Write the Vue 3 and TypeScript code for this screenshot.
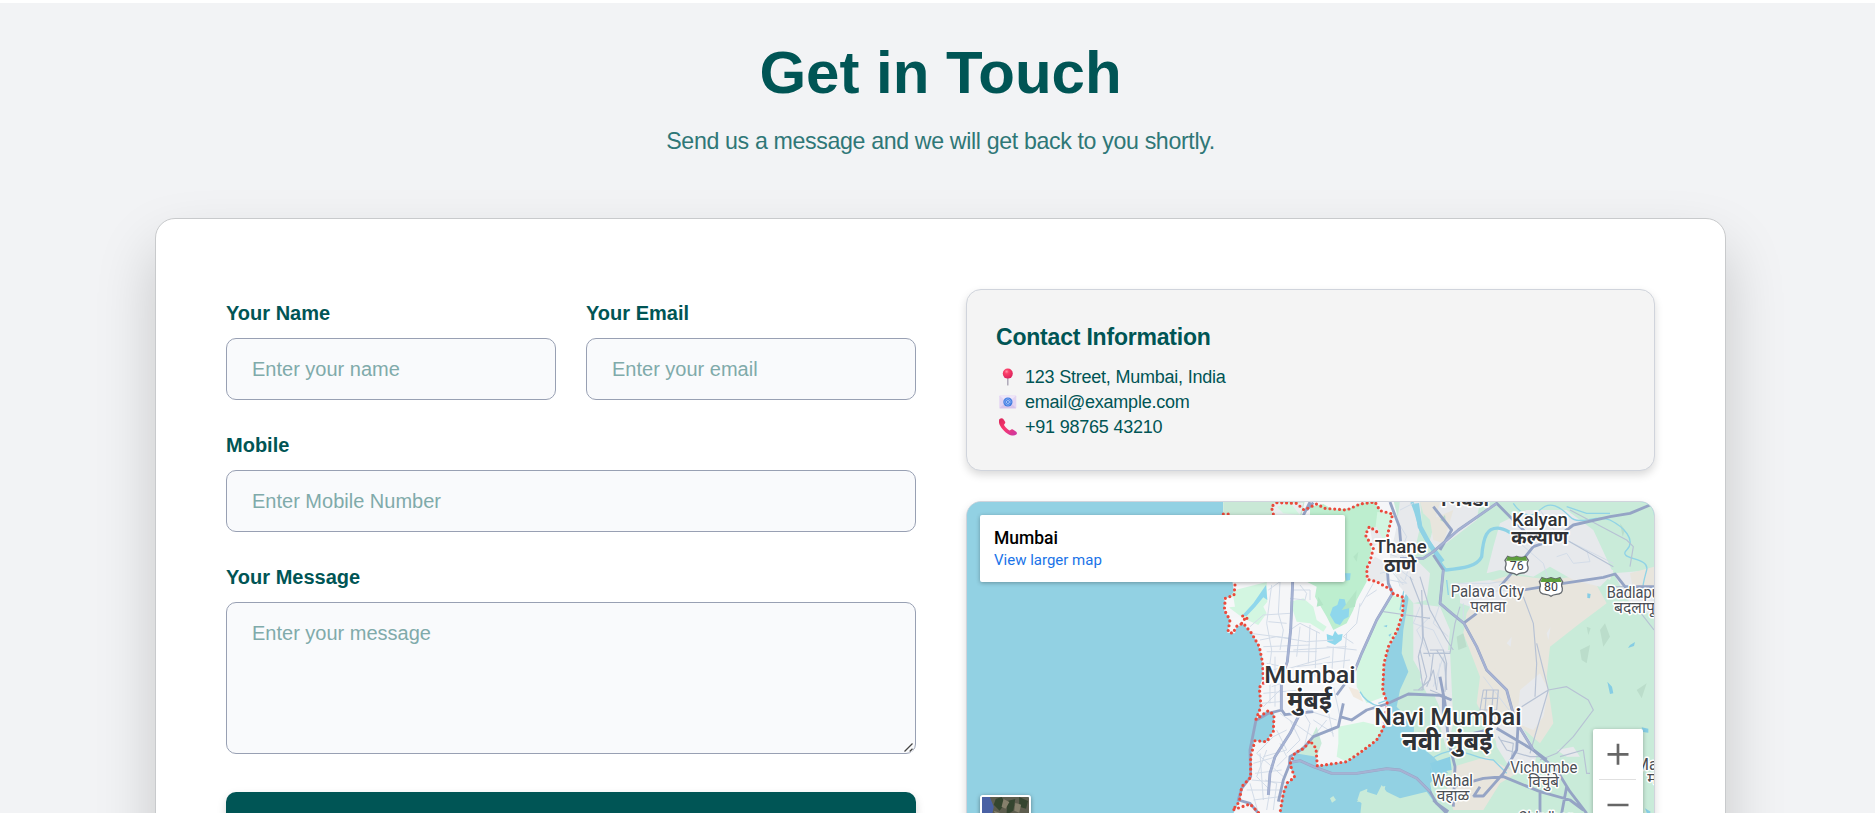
<script setup lang="ts">
import { ref } from 'vue'

interface MapLabel {
  text: string
  x: number
  y: number
  size: number
  width?: number
  kind: 'city' | 'city hindi' | 'town'
}

const name = ref('')
const email = ref('')
const mobile = ref('')
const message = ref('')

const labels: MapLabel[] = [
  { text: 'Mumbai', x: 193, y: 580, size: 72, width: 274, kind: 'city' },
  { text: 'मुंबई', x: 262, y: 656, size: 76, width: 134, kind: 'city hindi' },
  { text: 'Navi Mumbai', x: 523, y: 704, size: 72, width: 442, kind: 'city' },
  { text: 'नवी मुंबई', x: 606, y: 780, size: 76, width: 272, kind: 'city hindi' },
  { text: 'Thane', x: 524, y: 190, size: 57, width: 156, kind: 'city' },
  { text: 'ठाणे', x: 552, y: 245, size: 59, width: 97, kind: 'city hindi' },
  { text: 'Kalyan', x: 936, y: 108, size: 57, width: 168, kind: 'city' },
  { text: 'कल्याण', x: 934, y: 163, size: 59, width: 170, kind: 'city hindi' },
  { text: 'भिवंडी', x: 723, y: 47, size: 59, width: 144, kind: 'city hindi' },
  { text: 'Palava City', x: 752, y: 320, size: 47, width: 220, kind: 'town' },
  { text: 'पलावा', x: 811, y: 366, size: 48, width: 107, kind: 'town' },
  { text: 'Badlapur', x: 1220, y: 325, size: 47, width: 174, kind: 'town' },
  { text: 'बदलापूर', x: 1242, y: 369, size: 48, width: 142, kind: 'town' },
  { text: 'Vichumbe', x: 931, y: 848, size: 47, width: 201, kind: 'town' },
  { text: 'विचुंबे', x: 985, y: 891, size: 48, width: 92, kind: 'town' },
  { text: 'Wahal', x: 695, y: 887, size: 47, width: 124, kind: 'town' },
  { text: 'वहाळ', x: 710, y: 932, size: 48, width: 98, kind: 'town' },
  { text: 'Chirdhon', x: 955, y: 998, size: 47, width: 170, kind: 'town' },
  { text: 'Matheran', x: 1306, y: 840, size: 47, kind: 'town' },
  { text: 'माथेरान', x: 1342, y: 883, size: 48, kind: 'town' },
]

const shields = [
  { n: '76', x: 950, y: 226 },
  { n: '80', x: 1053, y: 290 },
]
</script>

<template>
  <main class="page">
    <section class="contact">
      <h1 class="title">Get in Touch</h1>
      <p class="subtitle">Send us a message and we will get back to you shortly.</p>

      <div class="card">
        <form class="form" @submit.prevent>
          <div class="row">
            <div class="field">
              <label for="name">Your Name</label>
              <input id="name" v-model="name" type="text" placeholder="Enter your name" />
            </div>
            <div class="field">
              <label for="email">Your Email</label>
              <input id="email" v-model="email" type="email" placeholder="Enter your email" />
            </div>
          </div>
          <div class="field">
            <label for="mobile">Mobile</label>
            <input id="mobile" v-model="mobile" type="tel" placeholder="Enter Mobile Number" />
          </div>
          <div class="field area">
            <label for="message">Your Message</label>
            <textarea id="message" v-model="message" placeholder="Enter your message"></textarea>
            <svg class="grip" viewBox="0 0 12 12">
              <path d="M1.500 10.500 9.500 2.500M6.700 10.500 9.500 7.700" stroke="#fff" stroke-width="3" />
              <path d="M1.500 10.500 9.500 2.500M6.700 10.500 9.500 7.700" stroke="#444" stroke-width="1.300" />
            </svg>
          </div>
          <button class="send" type="submit" aria-label="Send"></button>
        </form>

        <div class="side">
          <div class="info">
            <h2>Contact Information</h2>
            <ul>
              <li>
                <svg class="ico" viewBox="0 0 18 18">
                  <defs>
                    <radialGradient id="ball" cx=".38" cy=".3" r=".75">
                      <stop offset="0" stop-color="#ff8fa8" />
                      <stop offset=".3" stop-color="#fb3f68" />
                      <stop offset="1" stop-color="#d81f5c" />
                    </radialGradient>
                  </defs>
                  <rect x="8.1" y="9" width="1.4" height="8.6" rx=".6" fill="#a9a4b4" />
                  <circle cx="8.8" cy="5.6" r="5" fill="url(#ball)" />
                </svg>
                123 Street, Mumbai, India
              </li>
              <li>
                <svg class="ico" viewBox="0 0 18 18">
                  <rect x=".3" y="2.4" width="17" height="13" rx=".8" fill="#e3d5f2" />
                  <path d="M.5 2.6 8.8 10l8.3-7.4z" fill="#eee6f8" />
                  <path d="M.4 15.2 6 10h6l5.2 5.2z" fill="#d6c5ea" />
                  <circle cx="8.9" cy="9" r="4.6" fill="#3f7be0" />
                  <circle cx="8.9" cy="9" r="1.5" fill="none" stroke="#bcd6ff" stroke-width=".8" />
                  <path d="M10.4 7.6v1.8c0 1.3 1.6 1 1.6-.5a3.1 3.1 0 1 0-1.3 2.6" fill="none" stroke="#9cc0fa" stroke-width=".7" />
                </svg>
                email@example.com
              </li>
              <li>
                <svg class="ico" viewBox="0 0 18 18">
                  <defs>
                    <linearGradient id="tel" x1="0" y1="0" x2="1" y2="1">
                      <stop offset="0" stop-color="#d9265a" />
                      <stop offset=".45" stop-color="#f8386e" />
                      <stop offset="1" stop-color="#c837a8" />
                    </linearGradient>
                  </defs>
                  <path d="M.6 1C1.800 0 3.500 0 4.300 1l1.800 2.700c.5.900.1 1.700-.6 2.200-.6.500-.6 1 0 1.900 1.200 1.700 2.400 2.900 4.200 4.200.7.500 1.300.5 1.800 0 .7-.8 1.500-1 2.400-.4l3.300 2.200c1 .8.900 2 .1 2.700-1.900 1.600-5.300 1.300-8.300-.6C5.500 13.800 2.600 10.900.9 7.300-.3 4.900-.4 2.100.6 1z" fill="url(#tel)" />
                </svg>
                +91 98765 43210
              </li>
            </ul>
          </div>

          <div class="map">
            <svg class="canvas" viewBox="-699 36 2061 933" preserveAspectRatio="none">
              <rect x="-700" y="30" width="2070" height="950" fill="#92d1e3" />

              <!-- mainland -->
              <path d="M70 30 1370 30 1370 980 690 980 700 930 690 880 715 850 745 850 700 800 650 760 640 700 590 650 600 600 625 545 605 490 610 420 625 330 622 270 560 270 300 80 105 100 70 75z" fill="#c9ebd9" />
              <path d="M480 980 485 935 470 935 500 905 530 915 545 885 560 905 600 925 680 905 705 940 720 980z" fill="#c9ebd9" />
              <path d="M472 930 480 905 502 896 500 920 485 940zM390 925 400 918 408 930 396 938zM545 890 556 888 553 902 545 900z" fill="#c9ebd9" />

              <!-- island city -->
              <path class="land" d="M70 75 70 30H580L600 110 570 200 600 290 622 300 610 330 608 380 590 430 562 480 548 560 548 600 562 640 550 710 530 750 480 790 440 815 350 828 348 770 330 750 285 790 270 830 284 862 262 878 250 900 238 980H95L120 930 120 900 152 865 150 800 165 750 195 760 222 720 222 670 200 662 168 688 183 650 178 590 188 565 186 500 175 465 155 430 125 398 110 410 105 430 82 428 90 390 72 360 75 328 103 315z" />
              <path d="M70 30H315L305 75H70z" fill="#c9e8d6" />
              <path d="M215 75 220 40 310 38 300 75z" fill="#e9eef0" />
              <path class="park" d="M230 50 270 38 300 75 250 70z" />
              <path class="wood" d="M330 50 370 42 400 60 450 55 480 40 525 36 540 62 530 130 510 110 495 130 515 175 500 240 500 275 470 330 460 360 440 400 400 420 380 380 345 320 350 290 310 270 330 75z" />
              <path class="park" d="M532 66 578 70 568 120 545 165 525 125z" />
              <path class="park" d="M105 300 200 276 202 335 190 350 200 370 175 405 130 385 90 355 78 335z" />
              <path class="park" d="M270 335 310 325 340 350 350 390 380 410 370 425 330 400 290 395z" />
              <path class="park" d="M575 315 610 325 608 370 590 430 560 480 548 560 552 620 500 640 470 590 470 540 500 450 530 400z" />
              <path class="park" d="M415 710 490 695 550 710 530 750 480 790 440 815 410 800 415 760z" />
              <path d="M285 790 330 750 350 710 365 760 350 800z" fill="#c9ebd9" />
              <path d="M445 590 475 600 490 635 460 620z" fill="#f1e9df" />
              <path d="M500 230 525 200 560 220 560 270 540 280 500 265zM510 115 530 110 550 150 520 170z" fill="#e8eaed" />
              <path d="M70 325 100 320 105 350 85 352zM95 385 125 380 140 400 110 410z" fill="#f6f7f9" />
              <path d="M398 352 412 345 418 326 434 328 438 345 448 352 446 380 432 388 420 405 405 400 390 375zM380 432 398 438 405 422 414 434 428 432 425 450 405 465 382 455zM435 250 452 250 450 270 438 272z" fill="#8fd7ec" />
              <path d="M198 285 202 330 190 322 165 352 140 378 125 378 160 340z" fill="#8fd7ec" />
              <path d="M370 270 380 240 390 270zM460 200 475 185 470 215zM355 320 370 345 350 350zM425 360 470 300 465 350z" fill="#b3e5c6" />
              <path class="stream" d="M480 605c15 30 40 40 60 45M535 160 555 150M600 360l12-60 10-50" />

              <!-- urban and rural patches -->
              <path class="urban" d="M600 30H660L665 90 640 200 690 250 680 330 640 340 600 290 570 200 590 110z" />
              <path class="urban" d="M640 340 720 350 750 420 740 520 750 720 690 600 640 510 640 430z" />
              <path class="rural" d="M660 36 720 36 740 80 700 100 670 70z" />
              <path class="urban" d="M700 480 750 480 760 700 720 720 680 610 660 570z" />
              <path class="rural" d="M850 280 930 255 1060 270 1170 250 1220 340 1140 400 1050 470 1040 560 1060 700 1020 760 950 700 900 610 850 560 790 430 800 370z" />
              <path class="urban" d="M720 36 840 36 830 90 700 190 690 150z" />
              <path class="urban" d="M900 100 980 60 1100 60 1180 120 1240 250 1200 290 1120 270 1050 230 1000 260 900 240 860 250 880 170z" />
              <path class="urban" d="M780 280 870 270 960 300 900 340 840 360 780 340zM1240 250 1360 240 1362 380 1290 340z" />
              <path class="rural" d="M690 90 760 60 730 160 700 150zM820 380 870 500 950 690 890 760 830 640 840 560 790 430zM1290 250 1362 230 1362 290 1300 300z" />
              <path class="urban" d="M960 600 1020 550 1045 600 1030 680 1000 720 950 700z" />
              <path class="rural" d="M760 830 860 800 950 850 900 880 850 960 760 960 740 900z" />
              <path class="urban" d="M880 690 960 700 1010 790 1000 850 940 850 890 770z" />
              <path d="M650 630 700 610 740 700 730 790 690 780 640 740z" fill="#c9ebd9" />
              <path class="urban" d="M722 500 745 500 760 700 740 780 718 700z" />
              <path class="urban" d="M1130 190 1160 150 1190 190 1170 230zM1080 130 1110 140 1100 180zM1160 240 1240 240 1230 270zM1070 780 1120 770 1140 800 1100 800zM1040 430 1052 410 1045 450zM920 460 935 440 932 470z" />
              <path class="shade" d="M1140 480 1170 465 1160 520 1145 510zM1200 420 1215 400 1230 440 1210 470zM1310 600 1340 580 1325 625zM1160 410 1172 415 1165 435zM770 440 790 430 800 470 775 480zM720 90 735 75 738 100zM1260 100 1275 120 1268 140z" />
              <path d="M690 820 750 800 755 840 700 850zM690 830 705 880 690 870z" fill="#8bcfe4" />

              <!-- rivers -->
              <path class="river" d="M635 36C660 80 650 120 690 160 710 190 720 230 738 240 790 235 830 230 845 200 850 140 860 110 900 115 930 120 940 140 970 150" stroke-width="10" />
              <path class="river" d="M650 40 660 110 690 165 728 215" stroke-width="14" />
              <path class="stream" d="M940 40c20 30 50 50 80 20s60-10 90 20 80-10 120 10 80 60 50 90 70 20 60 60-20 60 0 100M690 810c80-60 130 0 190 0l40 40M740 270l5 45M1100 50l60 20 70 0M535 640l40-15" />
              <path d="M1162 310 1172 312 1170 325 1162 324zM1290 465 1305 456 1302 468 1284 474zM1222 575 1236 590 1240 610 1230 612zM1325 712 1345 716 1345 728 1328 726zM1335 955 1352 965 1345 980zM550 408 562 405 560 412zM565 435 575 430 570 440z" fill="#86cde4" />

              <!-- streets -->
              <g class="street">
                <path d="M205 300 240 275M215 285 200 400 215 480 205 560M240 276 235 370 250 420 240 480M150 410 190 375 270 370M150 430 270 445M190 470 330 465M200 485H350M180 450 230 440 320 455 400 450M205 395 260 400M300 285 320 310 315 330 270 325M280 300H330L330 330M300 410 290 500M330 405 325 520M350 425 345 560M270 420 300 400 360 430M400 470 395 560M440 430 430 540M280 480 440 470M290 530 450 510M480 340 470 400 430 440 460 460M520 280 480 350M500 320 530 300M380 470 470 480M200 520 250 530 190 550M215 590 300 560M190 610 300 600M185 640 240 635M250 540 390 500" />
                <path d="M225 500V650M210 540V640M190 650 240 600M240 670 340 740 380 690M270 690 300 750M340 690 400 730M300 650 330 700 310 780M320 660 410 690M380 640 400 740M400 590 420 680M260 720 220 740 170 790M230 720 260 780 190 800M170 790 250 860M160 820 230 800M165 850 245 840M180 790 190 930M155 870 270 880M140 900 250 900M160 930 240 920M200 780 170 860 210 900 200 960M230 830 260 800 240 760M195 870 230 880 220 960M150 880 175 970M260 790 300 750" />
                <path d="M590 90 620 140 600 190 630 220 615 270M600 240 640 270M580 250 610 285M560 190 590 200M570 215 620 210M640 40 600 60M540 250 580 240M570 270 620 280 600 260M660 350 640 400 700 420 730 480M690 380 650 420 680 480M720 340 700 400 745 440" />
                <path d="M760 280 870 280 930 270M780 300H830M790 340V390M780 310 930 300M960 160 1030 220 1045 270M1070 200 1100 190 1120 220 1170 215 1160 180M1100 150 1240 220M1020 60 1090 160M850 560 950 690M700 590 730 500 740 600M700 490 750 485M720 520 710 600" />
              </g>
              <g class="lane">
                <path d="M630 260 665 350 668 450 655 500 670 600M660 260 690 360 740 450 760 480M665 300 670 440 690 500M670 490 750 490 765 400 780 350M700 490 690 570 655 600M550 365 620 375 690 385M710 480 735 520 740 600M1100 150 1240 230M1110 60 1280 150 1300 170 1290 230M970 320 1000 400 1010 520 1005 620M1010 460 1045 600 965 650M1045 600 1100 590 1165 630 1180 660 1120 740 1070 790 1020 810M1080 800 1150 780 1160 850 1170 850M1045 600 1010 720 990 790M840 660 850 600 895 600 890 660zM850 625H895M860 600 855 660M880 600 875 665M895 740 920 780 990 800 1030 800M900 750 940 760 935 800" />
              </g>
              <g class="lane">
                <path d="M690 480H730L740 520 735 605M660 480 680 560 665 600M680 590 700 540 710 600M690 600 740 620M640 600 670 600M1240 290H1362M1300 340 1362 420" />
              </g>

              <!-- main roads -->
              <g class="case">
                <path d="M278 276 272 420 262 515 244 570V660M330 36 310 76M340 38 320 60M170 690 205 670 245 660 255 674 340 665M168 690 150 780 152 860 125 895 115 930 150 940 180 975M305 660 270 730 225 800 210 850 205 915M430 640 415 710 340 740 310 775 270 800 268 825 250 870 235 935M420 680 455 690 500 660 560 642 625 612 720 616 755 630M578 310 530 390 485 490 465 540 410 615" />
                <path d="M268 818 300 812 340 830 395 850 470 850 560 836 600 840 650 865 690 905 710 940 745 965M570 36 598 110 605 190M560 210 565 280 578 310M600 205H670L700 185 775 120 890 40 930 80 1000 150M720 180 755 120 700 50M700 195 730 240 720 340 755 370 792 400 830 470 860 540 920 600 945 690 1000 780 1040 810" />
                <path d="M1362 40 1290 70 1230 80 1120 105 1060 150 1000 170 960 220 900 290M970 300 1090 280 1210 262 1245 252 1275 290 1362 290M790 400 830 370M720 560 735 640 745 750 765 830 760 950M730 620V680M890 715 1000 780 1070 840 1110 905 1160 970M760 890 850 865 910 860 1020 905 1110 930 1150 960M820 918 850 918 910 850 950 780 955 690M840 890 820 920M1100 890 1085 970M1020 900V975M700 930 740 970M860 720 820 730" />
              </g>
              <g class="core">
                <path d="M278 276 272 420 262 515 244 570V660M305 660 270 730 225 800 210 850 205 915M578 310 530 390 485 490 465 540M268 818 300 812 340 830 395 850 470 850 560 836 600 840 650 865 690 905M600 205H670L700 185 775 120 890 40M730 240 720 340 755 370 792 400 830 470 860 540 920 600 945 690 1000 780" />
              </g>

              <!-- municipal boundary -->
              <g class="edge">
                <path d="M70 72H88M220 72 214 50 230 38 290 40 312 60 350 42 375 55 440 60 480 42 525 36 540 62 578 72 566 120 560 150M530 125 508 110 496 135 520 175 510 215 500 235 502 268 530 275 575 300 580 312 610 322 608 370 592 420 565 470 552 520 548 600 562 640 550 715 530 750 480 788 440 815 352 828 348 775 330 752 312 775 285 788 270 822 284 862 262 878 250 910 238 980" />
                <path d="M105 285 102 315 76 325 73 360 90 390 84 425 98 430 112 406 130 400 155 430 178 470 188 520 190 580 178 592 183 650 168 688 205 662 222 675 220 725 200 755 165 752 152 800 152 862 125 890 118 935 98 960 150 942 180 972M128 378 150 390M125 400 140 378" />
              </g>

              <!-- route shields -->
              <g v-for="s in shields" :key="s.n" :transform="`translate(${s.x} ${s.y})`">
                <path d="M-27-27Q-14-20 0-27 14-20 27-27L35-15Q29-6 34 5 36 22 16 23 6 24 0 29-6 24-16 23-36 22-34 5-29-6-35-15z" fill="#fff" stroke="#666b70" stroke-width="4" />
                <path d="M-26-27Q-14-20 0-27 14-20 26-27L32-14H-32z" fill="#5d9e3c" />
                <text y="14" font-size="37" text-anchor="middle" class="num">{{ s.n }}</text>
              </g>

              <text
                v-for="l in labels"
                :key="l.text"
                :x="l.x"
                :y="l.y"
                :font-size="l.size"
                :textLength="l.width"
                lengthAdjust="spacingAndGlyphs"
                :class="l.kind"
              >{{ l.text }}</text>
            </svg>

            <div class="place">
              <strong>Mumbai</strong>
              <a href="#">View larger map</a>
            </div>

            <div class="thumb">
              <svg viewBox="0 0 48 48">
                <rect width="48" height="48" fill="#5d5d4e" />
                <path d="M0 0H8L12 10 10 20 14 48H0z" fill="#4a61a4" />
                <path d="M14 2 20 0 24 6 18 14 12 8zM26 4 34 2 32 14 25 18zM38 0 47 4 45 12 38 10zM20 18 30 16 28 24z" fill="#34452f" />
                <path d="M22 2 28 5 24 12 20 10zM34 6 40 8 38 16 33 14zM12 14 18 16 16 22z" fill="#85806c" />
              </svg>
            </div>

            <div class="zoom">
              <svg viewBox="0 0 50 100">
                <path d="M14.500 25.300H35.500M25 14.800V35.800M14.500 76H35.500" stroke="#666" stroke-width="2.700" />
                <path d="M6 50.500H43" stroke="#e0e0e0" />
              </svg>
            </div>
          </div>
        </div>
      </div>
    </section>
  </main>
</template>

<style>
html,
body {
  margin: 0;
  background: #fff;
}
</style>

<style scoped>
* {
  box-sizing: border-box;
}
.page {
  height: 813px;
  overflow: hidden;
  padding-top: 3px;
  font-family: "Liberation Sans", Arial, sans-serif;
  color: #005555;
}
.contact {
  display: flex;
  flex-direction: column;
  align-items: center;
  padding: 34px 0 60px 6px;
  background: #f2f3f5;
}
.title {
  margin: 0 0 15px;
  font-size: 60px;
  line-height: 72px;
  font-weight: 700;
}
.subtitle {
  margin: 0 0 60px;
  font-size: 23.2px;
  letter-spacing: -0.36px;
  line-height: 34px;
  color: #2f7777;
}
.card {
  display: grid;
  grid-template-columns: 690px 689px;
  gap: 50px;
  width: 1571px;
  height: 900px;
  padding: 70px;
  background: #fff;
  border: 1px solid #c8cacc;
  border-radius: 20px;
  box-shadow: 0 30px 60px rgba(0, 0, 0, 0.18);
}
.form {
  display: flex;
  flex-direction: column;
  gap: 30px;
  padding-top: 9px;
}
.row {
  display: grid;
  grid-template-columns: 1fr 1fr;
  gap: 30px;
}
.field {
  display: flex;
  flex-direction: column;
  gap: 10px;
}
.area {
  position: relative;
}
.grip {
  position: absolute;
  right: 1px;
  bottom: 1px;
  width: 12px;
  height: 12px;
  pointer-events: none;
}
label {
  font-size: 20px;
  line-height: 30px;
  font-weight: 700;
}
input,
textarea {
  width: 100%;
  height: 62px;
  margin: 0;
  padding: 18px 25px;
  font: 20px/24px "Liberation Sans", Arial, sans-serif;
  color: #005555;
  background: #f9fafc;
  border: 1px solid #98a0b3;
  border-radius: 10px;
  outline: none;
}
textarea {
  height: 152px;
  resize: none;
}
input::placeholder,
textarea::placeholder {
  color: #80aaaa;
  opacity: 1;
}
.send {
  height: 64px;
  margin-top: 8px;
  border: 0;
  border-radius: 10px;
  background: #005555;
  box-shadow: 0 4px 10px rgba(0, 0, 0, 0.15);
}
.side {
  display: flex;
  flex-direction: column;
  gap: 30px;
}
.info {
  padding: 30px 30px 30px 29px;
  height: 182px;
  background: #f4f4f4;
  border: 1px solid #d0d4dc;
  border-radius: 15px;
  box-shadow: 0 4px 8px rgba(0, 0, 0, 0.15);
}
.info h2 {
  margin: 0 0 11px;
  font-size: 23px;
  letter-spacing: -0.2px;
  line-height: 34px;
}
.info ul {
  margin: 0;
  padding: 0;
  list-style: none;
}
.info li {
  display: flex;
  align-items: center;
  height: 25px;
  gap: 8px;
  padding-left: 3px;
  font-size: 18px;
  letter-spacing: -0.22px;
  line-height: 25px;
}
.ico {
  width: 18px;
  height: 18px;
  margin-top: -1px;
}
.map {
  position: relative;
  height: 400px;
  overflow: hidden;
  background: #92d1e3;
  border: 1px solid #d0d4dc;
  border-radius: 15px;
  box-shadow: 0 4px 8px rgba(0, 0, 0, 0.15);
}
.canvas {
  display: block;
  width: 687px;
  height: 311px;
}
.land {
  fill: #f5f6f8;
}
.park {
  fill: #d3f6e1;
}
.wood {
  fill: #bdeecf;
}
.urban {
  fill: #e7e9ec;
}
.rural {
  fill: #e8e5dd;
}
.shade {
  fill: #bbddcb;
}
.river,
.stream,
.street,
.lane,
.case,
.core,
.edge {
  fill: none;
  stroke-linejoin: round;
}
.river {
  stroke: #8fd2e5;
}
.stream {
  stroke: #90d3e6;
  stroke-width: 4;
}
.street {
  stroke: #d3dce8;
  stroke-width: 3;
}
.lane {
  stroke: #b7c2d4;
  stroke-width: 3.5;
}
.case {
  stroke: #95a4c5;
  stroke-width: 8.500;
}
.core {
  stroke: #a6b2d3;
  stroke-width: 6;
}
.edge {
  stroke: #ea4a3c;
  stroke-width: 9.500;
  stroke-linecap: round;
  stroke-dasharray: 0 14.500;
}
.city,
.town,
.num {
  font-family: Roboto, "Noto Sans", sans-serif;
}
.city {
  font-weight: 500;
  fill: #2f3236;
  stroke: #fff;
  stroke-width: 10;
  stroke-linejoin: round;
  paint-order: stroke;
}
.hindi {
  font-weight: 700;
}
.town {
  fill: #4a4e54;
  stroke: #fff;
  stroke-width: 9;
  stroke-linejoin: round;
  paint-order: stroke;
}
.num {
  fill: #3c4043;
}
.place {
  position: absolute;
  top: 13px;
  left: 13px;
  display: flex;
  flex-direction: column;
  width: 365px;
  height: 67px;
  padding: 12px 14px;
  font-family: Roboto, sans-serif;
  background: #fff;
  border-radius: 2px;
  box-shadow: 0 1px 4px rgba(0, 0, 0, 0.3);
}
.place strong {
  font-size: 17.500px;
  line-height: 22px;
  font-weight: 500;
  color: #000;
}
.place a {
  font-size: 15px;
  line-height: 22px;
  color: #1a73e8;
  text-decoration: none;
}
.thumb {
  position: absolute;
  top: 293px;
  left: 13px;
  width: 51px;
  height: 51px;
  overflow: hidden;
  border: 2px solid #fff;
  border-radius: 3px;
  box-shadow: 0 1px 4px rgba(0, 0, 0, 0.4);
}
.thumb svg,
.zoom svg {
  display: block;
  width: 100%;
}
.zoom {
  position: absolute;
  top: 227px;
  right: 11px;
  width: 50px;
  height: 100px;
  background: #fff;
  border-radius: 2px;
  box-shadow: 0 1px 4px rgba(0, 0, 0, 0.3);
}
</style>
